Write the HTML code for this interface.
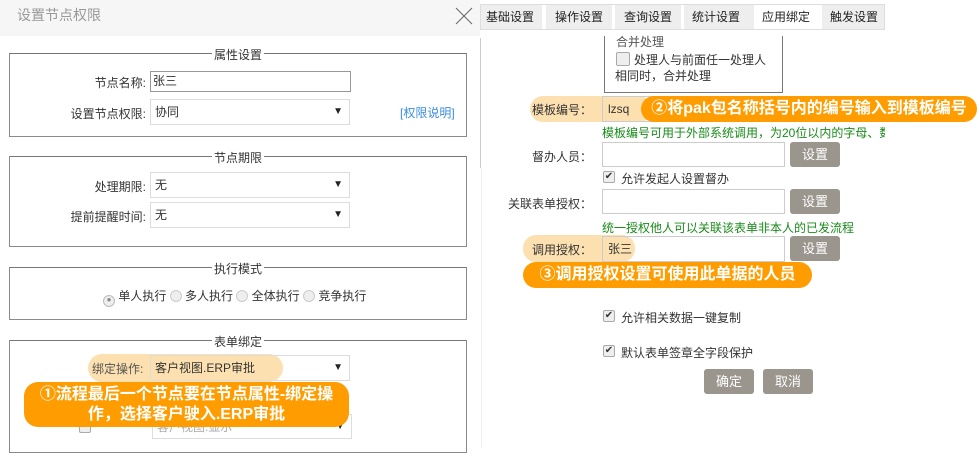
<!DOCTYPE html>
<html><head><meta charset="utf-8"><style>
*{margin:0;padding:0;box-sizing:border-box}
body{width:977px;height:457px;overflow:hidden;background:#fff;font-family:"Liberation Sans","Noto Sans CJK SC",sans-serif;font-size:12px;color:#333;position:relative}
.a{position:absolute}
.fs{position:absolute;left:9px;width:458px;border:1px solid #8a8a8a;border-top:1px solid #777}
.lg{position:absolute;top:-8px;left:0;width:100%;text-align:center}
.lg span{background:#fff;padding:0 2px;color:#333}
.lbl{position:absolute;text-align:right;width:140px;left:0}
.sel{position:absolute;border:1px solid #ddd;background:#fff;padding-left:4px;line-height:24px}
.sel:after{content:"▼";position:absolute;right:6px;top:0;font-size:10px;color:#222}
.inp{position:absolute;border:1px solid #ccc;background:#fff}
.btn{position:absolute;background:#9a958d;color:#fff;border-radius:3px;text-align:center;line-height:25px;font-size:13px}
.cb{position:absolute;width:12px;height:12px;border:1px solid #aaa;border-radius:2px;background:#eee;font-size:10px;line-height:10px;text-align:center;color:#333}
.g{color:#1a8a1a}
.or{position:absolute;background:#ff9c00;color:#fff;font-weight:bold;border-radius:14px;text-align:center;white-space:nowrap}
.tab{position:absolute;top:5px;height:24px;line-height:24px;font-size:12px;color:#222;background:#eee}
</style></head><body>
<div class="a" style="left:0;top:0;width:480px;height:36px;background:#f6f6f6"></div>
<div class="a" style="left:17px;top:5px;font-size:14px;color:#999">设置节点权限</div>
<svg class="a" style="left:455px;top:7px" width="18" height="18"><path d="M1 1L17 17M17 1L1 17" stroke="#666" stroke-width="1" fill="none"/></svg>
<div class="a" style="left:480px;top:38px;width:1px;height:130px;background:#ccc"></div>
<div class="a" style="left:481px;top:168px;width:1px;height:280px;background:#eee"></div>

<div class="fs" style="top:53px;height:84px"><div class="lg"><span>属性设置</span></div></div>
<div class="lbl" style="top:74px;width:146px">节点名称:</div>
<div class="inp" style="left:150px;top:71px;width:201px;height:21px;border-color:#999;padding-left:2px;line-height:19px">张三</div>
<div class="lbl" style="top:105px;width:146px">设置节点权限:</div>
<div class="sel" style="left:150px;top:99px;width:200px;height:26px">协同</div>
<div class="a" style="left:400px;top:104px;color:#3a8ee0">[权限说明]</div>

<div class="fs" style="top:156px;height:91px"><div class="lg"><span>节点期限</span></div></div>
<div class="lbl" style="top:178px;width:146px">处理期限:</div>
<div class="sel" style="left:150px;top:172px;width:200px;height:26px">无</div>
<div class="lbl" style="top:208px;width:146px">提前提醒时间:</div>
<div class="sel" style="left:150px;top:202px;width:200px;height:26px">无</div>

<div class="fs" style="top:267px;height:53px"><div class="lg"><span>执行模式</span></div></div>
<div class="a" style="left:103px;top:287px;color:#333">
<span style="display:inline-block;width:12px;height:12px;border:1px solid #bbb;border-radius:50%;background:#eee;vertical-align:-2px;text-align:center;line-height:8px;font-size:8px;color:#888">●</span> 单人执行 <span style="display:inline-block;width:12px;height:12px;border:1px solid #ccc;border-radius:50%;background:#eee;vertical-align:-2px"></span> 多人执行 <span style="display:inline-block;width:12px;height:12px;border:1px solid #ccc;border-radius:50%;background:#eee;vertical-align:-2px"></span> 全体执行 <span style="display:inline-block;width:12px;height:12px;border:1px solid #ccc;border-radius:50%;background:#eee;vertical-align:-2px"></span> 竞争执行</div>

<div class="fs" style="top:340px;height:113px"><div class="lg"><span>表单绑定</span></div></div>
<div class="a" style="left:88px;top:354px;width:195px;height:28px;background:#fde0b0;border-radius:14px"></div>
<div class="a" style="left:92px;top:360px;color:#555">绑定操作:</div>
<div class="sel" style="left:150px;top:355px;width:200px;height:26px;background:transparent">客户视图.ERP审批</div>
<div class="sel" style="left:152px;top:414px;width:200px;height:25px;color:#aaa">客户视图.显示</div>
<div class="cb" style="left:79px;top:421px"></div>
<div class="or" style="left:24px;top:382px;width:325px;height:45px;font-size:16px;line-height:20px;padding-top:3px">①流程最后一个节点要在节点属性-绑定操<br>作，选择客户驶入.ERP审批</div>

<div class="tab" style="left:480px;width:62px;padding-left:6px">基础设置</div>
<div class="tab" style="left:546px;width:66px;padding-left:9px">操作设置</div>
<div class="tab" style="left:615px;width:66px;padding-left:9px">查询设置</div>
<div class="tab" style="left:684px;width:70px;padding-left:8px">统计设置</div>
<div class="tab" style="left:754px;width:66px;padding-left:8px;background:#fff">应用绑定</div>
<div class="tab" style="left:822px;width:63px;padding-left:8px">触发设置</div>
<div class="a" style="left:480px;top:4px;width:405px;height:26px;border:1px solid #ddd"></div>

<div class="a" style="left:604px;top:36px;width:179px;height:57px;border:1px solid #777;border-top:none"></div>
<div class="a" style="left:616px;top:33px;color:#555">合并处理</div>
<div class="cb" style="left:616px;top:52px;width:14px;height:14px"></div>
<div class="a" style="left:634px;top:51px">处理人与前面任一处理人</div>
<div class="a" style="left:615px;top:67px">相同时，合并处理</div>

<div class="a" style="left:530px;top:96px;width:122px;height:26px;background:#fde0b0;border-radius:13px"></div>
<div class="a" style="left:532px;top:101px">模板编号：</div>
<div class="inp" style="left:602px;top:96px;width:60px;height:26px;padding-left:5px;line-height:24px;background:transparent;border-color:#ccc">lzsq</div>
<div class="or" style="left:641px;top:96px;width:336px;height:26px;font-size:16px;line-height:26px">②将pak包名称括号内的编号输入到模板编号</div>
<div class="a g" style="left:602px;top:124px;width:283px;overflow:hidden;white-space:nowrap">模板编号可用于外部系统调用，为20位以内的字母、数字</div>

<div class="a" style="left:532px;top:148px;width:60px;text-align:right">督办人员：</div>
<div class="inp" style="left:602px;top:142px;width:183px;height:25px"></div>
<div class="btn" style="left:790px;top:142px;width:50px">设置</div>
<div class="cb" style="left:603px;top:171px">✔</div>
<div class="a" style="left:621px;top:170px">允许发起人设置督办</div>
<div class="a" style="left:500px;top:195px;width:92px;text-align:right">关联表单授权：</div>
<div class="inp" style="left:602px;top:189px;width:183px;height:25px"></div>
<div class="btn" style="left:790px;top:189px;width:50px">设置</div>
<div class="a g" style="left:602px;top:219px">统一授权他人可以关联该表单非本人的已发流程</div>

<div class="a" style="left:523px;top:235px;width:112px;height:27px;background:#fde0b0;border-radius:13px"></div>
<div class="a" style="left:532px;top:241px">调用授权：</div>
<div class="inp" style="left:602px;top:236px;width:183px;height:26px;padding-left:5px;line-height:24px;background:transparent">张三</div>
<div class="btn" style="left:790px;top:236px;width:50px">设置</div>
<div class="or" style="left:523px;top:262px;width:289px;height:26px;font-size:16px;line-height:26px">③调用授权设置可使用此单据的人员</div>

<div class="cb" style="left:603px;top:310px">✔</div>
<div class="a" style="left:621px;top:309px">允许相关数据一键复制</div>
<div class="cb" style="left:603px;top:345px">✔</div>
<div class="a" style="left:621px;top:344px">默认表单签章全字段保护</div>
<div class="btn" style="left:704px;top:369px;width:50px">确定</div>
<div class="btn" style="left:763px;top:369px;width:50px">取消</div>
</body></html>
